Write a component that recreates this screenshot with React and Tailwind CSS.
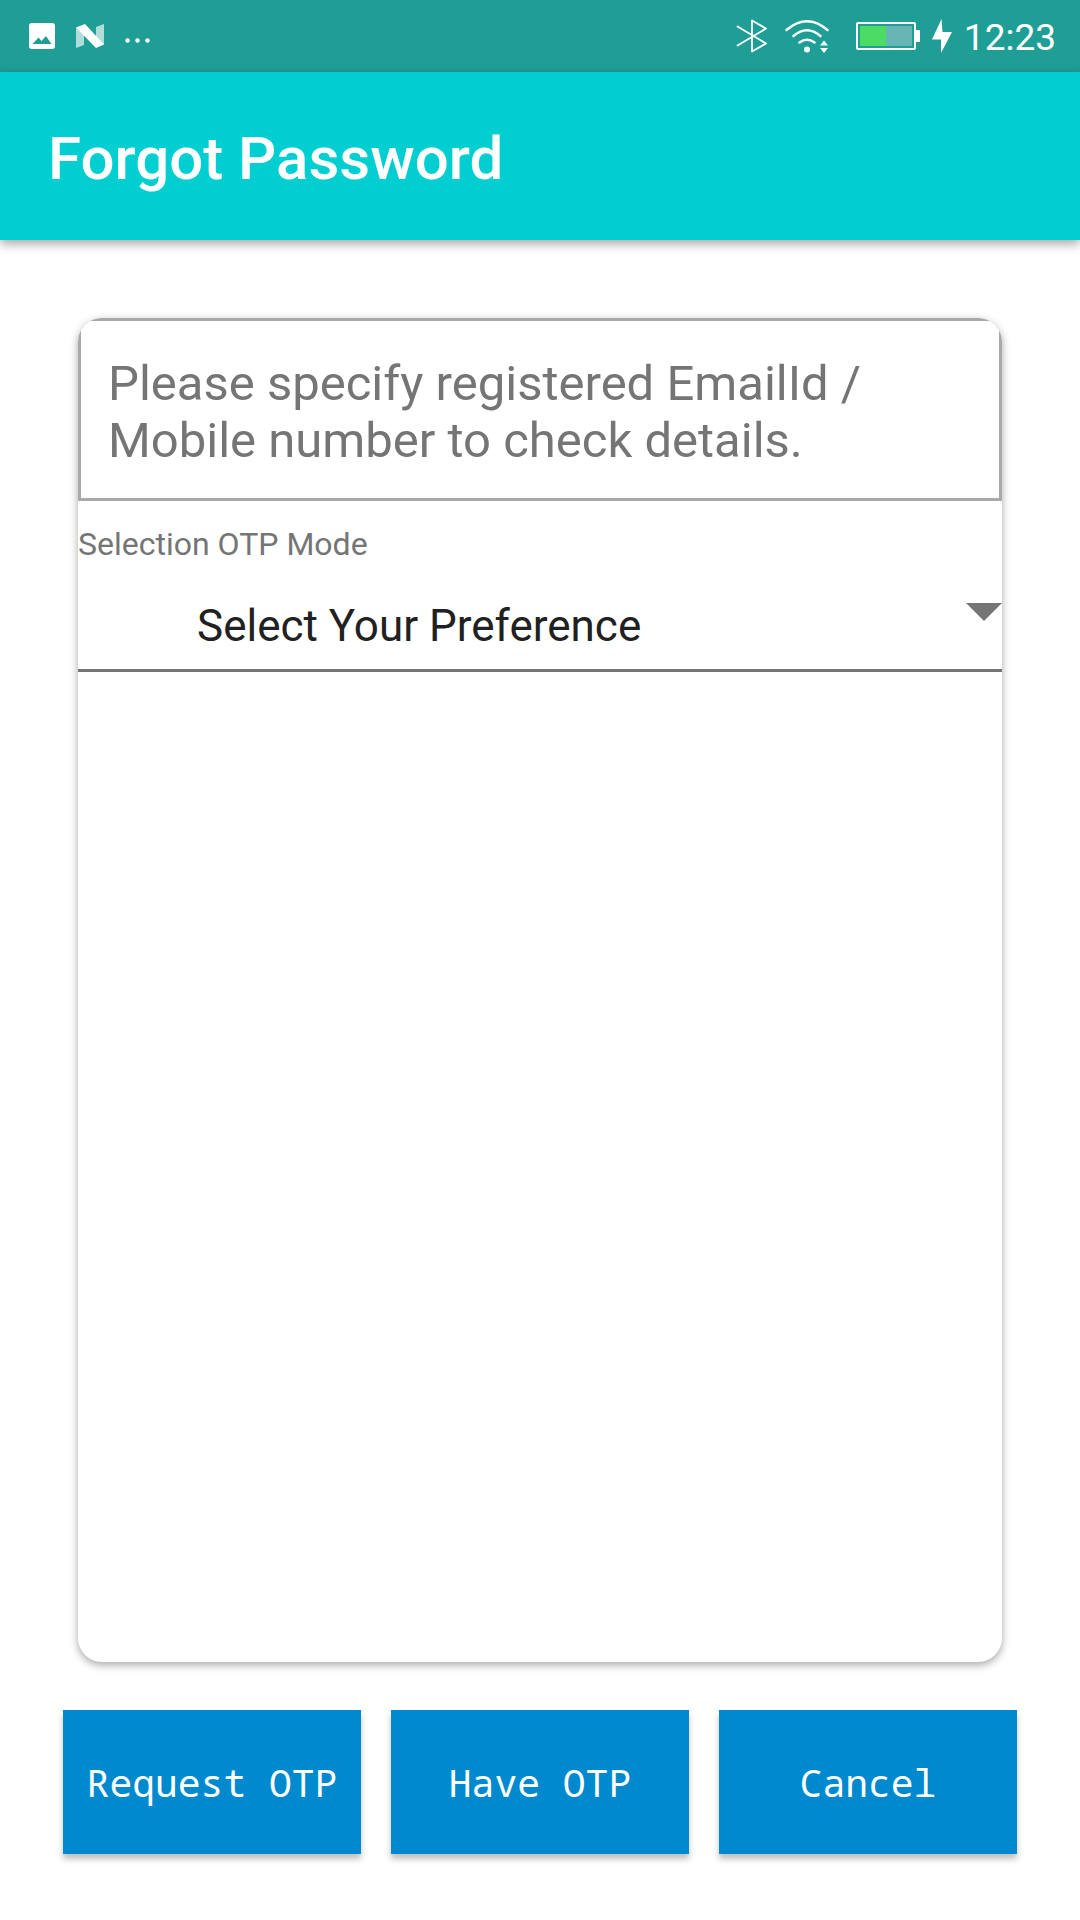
function StatusBar() {
  return (
    <div className="flex h-[72px] items-center justify-between bg-[#1f9e96] pr-[24px] pl-[29px] text-white">
      <div className="flex items-center gap-[21px]">
        <svg className="h-[26px] w-[26px]" viewBox="0 0 26 26" aria-hidden="true">
          <rect width="26" height="26" rx="3" fill="#fff" />
          <path d="M3.5 21 9.500 14.500l3 3.500L17 13l5.500 8z" fill="#1f9e96" />
        </svg>
        <svg className="h-[24px] w-[28px]" viewBox="0 0 28 24" aria-hidden="true">
          <path d="M0 3.500 8 8V21L0 24z" fill="#fff" opacity=".65" />
          <path d="M20 3 28 0V20.500L20 15z" fill="#fff" opacity=".65" />
          <path d="M0 3.500 9 0 28 20.500 20 24z" fill="#fff" />
        </svg>
        <svg className="mt-2 h-[5px] w-[25px]" viewBox="0 0 25 5" fill="#fff" aria-hidden="true">
          <circle cx="2.500" cy="2.500" r="2.200" />
          <circle cx="12.500" cy="2.500" r="2.200" />
          <circle cx="22.500" cy="2.500" r="2.200" />
        </svg>
      </div>
      <div className="flex items-center">
        <svg className="h-[34px] w-[32px]" viewBox="0 0 32 34" fill="none" stroke="#fff" strokeWidth="1.800" aria-hidden="true">
          <path d="M1.500 7.500 30 24.500 16 32.500V1.500L30 9.500 1.500 26.500" strokeLinejoin="round" strokeLinecap="round" />
        </svg>
        <svg className="ml-[17px] h-[34px] w-[44px]" viewBox="0 0 44 34" fill="none" stroke="#fff" strokeWidth="2.600" strokeLinecap="round" aria-hidden="true">
          <path d="M1.500 11Q22-6.500 42.500 11" />
          <path d="M8.500 17Q22 5.500 35.500 17" />
          <path d="M14.500 23.500Q22 18 29.500 23.500" />
          <circle cx="22" cy="30.500" r="3" fill="#fff" stroke="none" />
          <path d="M39 21.500l4 5h-8zM39 34l-4-5h8z" fill="#fff" stroke="none" />
        </svg>
        <svg className="ml-[27px] h-[28px] w-[64px]" viewBox="0 0 64 28" aria-hidden="true">
          <rect x="1" y="1" width="58" height="26" rx="1" fill="none" stroke="#fff" strokeWidth="2" />
          <rect x="4" y="4" width="52" height="20" fill="#67b5b5" />
          <rect x="4" y="4" width="26" height="20" fill="#4cdb63" />
          <rect x="59" y="8" width="5" height="12" fill="#fff" />
        </svg>
        <svg className="ml-[12px] h-[34px] w-[20px]" viewBox="0 0 20 34" fill="#fff" aria-hidden="true">
          <path d="M9.500 0 0 20.500h9V34L20 13h-9.500z" />
        </svg>
        <time className="ml-[12px] pt-[4px] text-[37px] leading-[44px]">12:23</time>
      </div>
    </div>
  );
}

const actions = ["Request OTP", "Have OTP", "Cancel"];

export default function App() {
  return (
    <div className="flex min-h-screen flex-col bg-white font-['Roboto',sans-serif]">
      <StatusBar />
      <header className="flex h-[168px] items-center bg-[#00ced1] px-[48px] pt-[6px] shadow-[0_4px_10px_rgba(0,0,0,0.35)]">
        <h1 className="text-[60px] leading-[72px] font-medium text-white">Forgot Password</h1>
      </header>
      <form className="flex grow flex-col px-[63px] pt-[78px] pb-[66px]" onSubmit={(e) => e.preventDefault()}>
        <div className="mx-[15px] flex grow flex-col overflow-hidden rounded-[24px] shadow-[0_3px_9px_rgba(0,0,0,0.35)]">
          <textarea
            aria-label="Registered email or mobile number"
            rows={2}
            placeholder="Please specify registered EmailId / Mobile number to check details."
            className="block h-[183px] w-full resize-none overflow-hidden border-3 border-[#a9a9a9] px-[27px] pt-[34px] text-[49px] leading-[57px] text-[#212121] outline-none placeholder:text-[#757575]"
          />
          <label htmlFor="otp-mode" className="mt-[23px] text-[32px] leading-[40px] text-[#757575]">
            Selection OTP Mode
          </label>
          <div className="relative mt-[19px] border-b-3 border-[#757575]">
            <select
              id="otp-mode"
              className="block h-[86px] w-full appearance-none bg-transparent pr-[48px] pl-[119px] text-[44px] leading-[52px] text-[#212121] outline-none"
            >
              <option>Select Your Preference</option>
            </select>
            <svg className="pointer-events-none absolute top-[20px] right-0 h-[18px] w-[36px]" viewBox="0 0 36 18" aria-hidden="true">
              <path d="M0 0h36L18 18z" fill="#757575" />
            </svg>
          </div>
        </div>
        <div className="mt-[48px] grid grid-cols-3 gap-[30px]">
          {actions.map((label) => (
            <button
              key={label}
              type="button"
              className="h-[144px] bg-[#0089cf] font-['Noto_Sans_Mono','DejaVu_Sans_Mono',monospace] text-[38px] text-white shadow-[0_5px_6px_rgba(0,0,0,0.25)]"
            >
              {label}
            </button>
          ))}
        </div>
      </form>
    </div>
  );
}
